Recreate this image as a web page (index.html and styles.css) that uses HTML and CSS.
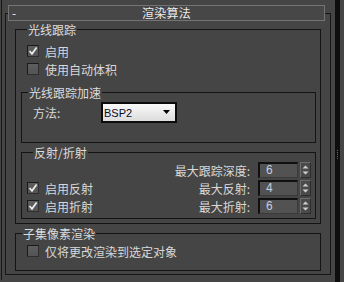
FILE: index.html
```html
<!DOCTYPE html>
<html lang="zh-CN">
<head>
  <meta charset="UTF-8" />
  <title>渲染算法</title>
  <link rel="stylesheet" href="styles.css">
</head>
<body>
  <div class="frame">
    <div class="outer">
      <div class="rollout">
        <div class="rollout-head">
          <span class="dash">-</span>
          <span class="rollout-title">渲染算法</span>
          <span></span>
        </div>

        <div class="group g-main">
          <span class="legend">光线跟踪</span>
          <label class="row check-row">
            <span class="checkbox"><svg width="10" height="10" viewBox="0 0 10 10"><path d="M1.5 5 L4 7.8 L8.6 1.6" fill="none" stroke="#eee" stroke-width="1.7"/></svg></span>
            启用
          </label>
          <label class="row check-row">
            <span class="checkbox"></span>
            使用自动体积
          </label>

          <div class="group g-accel">
            <span class="legend">光线跟踪加速</span>
            <div class="method-row">
              <span class="method-label">方法:</span>
              <div class="dropdown">
                <span>BSP2</span>
                <svg width="8" height="5" viewBox="0 0 8 5"><path d="M0 0 H7 L3.5 4 Z" fill="#000"/></svg>
              </div>
            </div>
          </div>

          <div class="group g-reflect">
            <span class="legend">反射/折射</span>
            <div class="row spin-row">
              <span class="row-left"></span>
              <span class="spin-label">最大跟踪深度:</span>
              <span class="spin-box">6</span>
              <span class="spin-btn"><svg width="9" height="14" viewBox="0 0 9 14"><path d="M1.5 5.5 H7.5 L4.5 2.5 Z M1.5 8.5 H7.5 L4.5 11.5 Z" fill="#d0d0d0"/></svg></span>
            </div>
            <div class="row spin-row">
              <label class="row-left">
                <span class="checkbox"><svg width="10" height="10" viewBox="0 0 10 10"><path d="M1.5 5 L4 7.8 L8.6 1.6" fill="none" stroke="#eee" stroke-width="1.7"/></svg></span>
                启用反射
              </label>
              <span class="spin-label">最大反射:</span>
              <span class="spin-box">4</span>
              <span class="spin-btn"><svg width="9" height="14" viewBox="0 0 9 14"><path d="M1.5 5.5 H7.5 L4.5 2.5 Z M1.5 8.5 H7.5 L4.5 11.5 Z" fill="#d0d0d0"/></svg></span>
            </div>
            <div class="row spin-row">
              <label class="row-left">
                <span class="checkbox"><svg width="10" height="10" viewBox="0 0 10 10"><path d="M1.5 5 L4 7.8 L8.6 1.6" fill="none" stroke="#eee" stroke-width="1.7"/></svg></span>
                启用折射
              </label>
              <span class="spin-label">最大折射:</span>
              <span class="spin-box">6</span>
              <span class="spin-btn"><svg width="9" height="14" viewBox="0 0 9 14"><path d="M1.5 5.5 H7.5 L4.5 2.5 Z M1.5 8.5 H7.5 L4.5 11.5 Z" fill="#d0d0d0"/></svg></span>
            </div>
          </div>
        </div>

        <div class="group g-sub">
          <span class="legend">子集像素渲染</span>
          <label class="row check-row">
            <span class="checkbox"></span>
            仅将更改渲染到选定对象
          </label>
        </div>
      </div>
    </div>
    <div class="scrollbar"><span class="grip"></span></div>
  </div>
</body>
</html>
```

FILE: styles.css
```css
body {
  margin: 0;
  background: #454545;
  font-family: "Noto Sans CJK SC", "Liberation Sans", sans-serif;
  font-size: 12px;
  color: #d8d8d8;
}
.frame {
  display: flex;
  height: 282px;
  overflow: hidden;
}
.outer {
  margin-left: 1px;
  border-left: 1px solid #161616;
  padding-left: 3px;
  height: 280px;
}
.rollout {
  box-sizing: border-box;
  width: 326px;
  margin-top: 13px;
  border: 1px solid #161616;
  padding-bottom: 3px;
}
.rollout-head {
  display: grid;
  grid-template-columns: 1fr auto 1fr;
  align-items: center;
  height: 16px;
  box-sizing: border-box;
  margin: -9px 5px 0 2px;
  border: 1px solid #747474;
  background: #474747;
  color: #ececec;
  line-height: 14px;
}
.dash { padding-left: 3px; }
.rollout-title { letter-spacing: 0.3px; }

/* group boxes: legend sits on the top border */
.group {
  border: 1px solid #141414;
}
.legend {
  display: block;
  width: max-content;
  height: 14px;
  line-height: 14px;
  margin: -7px 0 0 6px;
  padding: 0 1px;
  background: #454545;
  color: #dcdcdc;
}
.g-main {
  margin: 8px 9px 0 9px;
  padding: 0 4px 4px 5px;
}
.g-main > .legend { margin-bottom: 5px; }
.g-accel {
  margin-top: 14px;
  padding-bottom: 19px;
}
.g-accel > .legend { margin-bottom: 2px; }
.g-reflect {
  margin-top: 9px;
  padding: 0 4px 3px 5px;
}
.g-reflect > .legend { margin-bottom: 1px; }
.g-sub {
  margin: 9px 9px 0 9px;
  padding: 0 0 10px 11px;
}
.g-sub > .legend { margin: -7px 0 1px -5px; }

.row {
  display: flex;
  align-items: center;
  height: 18px;
}
.check-row { padding-left: 6px; gap: 6px; }
.g-sub .check-row { padding-left: 0; }

.checkbox {
  display: flex;
  align-items: center;
  justify-content: center;
  box-sizing: border-box;
  width: 12px;
  height: 12px;
  border: 1px solid #1a1a1a;
  border-right-color: #2e2e2e;
  border-bottom-color: #2e2e2e;
  background: linear-gradient(#5e5e5e, #545454);
}

.method-row {
  display: flex;
  align-items: center;
  padding-left: 11px;
}
.method-label { width: 68px; }
.dropdown {
  box-sizing: border-box;
  display: flex;
  align-items: center;
  justify-content: space-between;
  width: 76px;
  height: 21px;
  padding: 0 4px 0 1px;
  border: 2px solid #0c0c0c;
  background: linear-gradient(#fafafa, #dcdcdc);
  color: #0a0a1e;
  font-family: "Liberation Sans", sans-serif;
  font-size: 11px;
}

.row-left {
  flex: 1;
  display: flex;
  align-items: center;
  gap: 6px;
}
.spin-label { margin-right: 8px; }
.spin-box {
  box-sizing: border-box;
  width: 40px;
  height: 16px;
  padding-left: 6px;
  border-top: 2px solid #101010;
  border-left: 2px solid #101010;
  border-right: 1px solid #3a3a3a;
  border-bottom: 1px solid #3a3a3a;
  background: #525252;
  color: #c4cee0;
  font-family: "Liberation Sans", sans-serif;
  font-size: 12px;
  line-height: 13px;
}
.spin-btn {
  box-sizing: border-box;
  display: flex;
  align-items: center;
  justify-content: center;
  width: 11px;
  height: 16px;
  margin-left: 2px;
  border: 1px solid #6c6c6c;
  border-right-color: #2c2c2c;
  border-bottom-color: #2c2c2c;
  background: #4a4a4a;
}

.scrollbar {
  margin-left: 4px;
  width: 5px;
  background: #0e0e0e;
  display: flex;
  justify-content: center;
  padding-top: 150px;
  box-sizing: border-box;
}
.grip {
  width: 1px;
  height: 9px;
  background: repeating-linear-gradient(#6a6a6a 0 1px, transparent 1px 2px);
}
```
